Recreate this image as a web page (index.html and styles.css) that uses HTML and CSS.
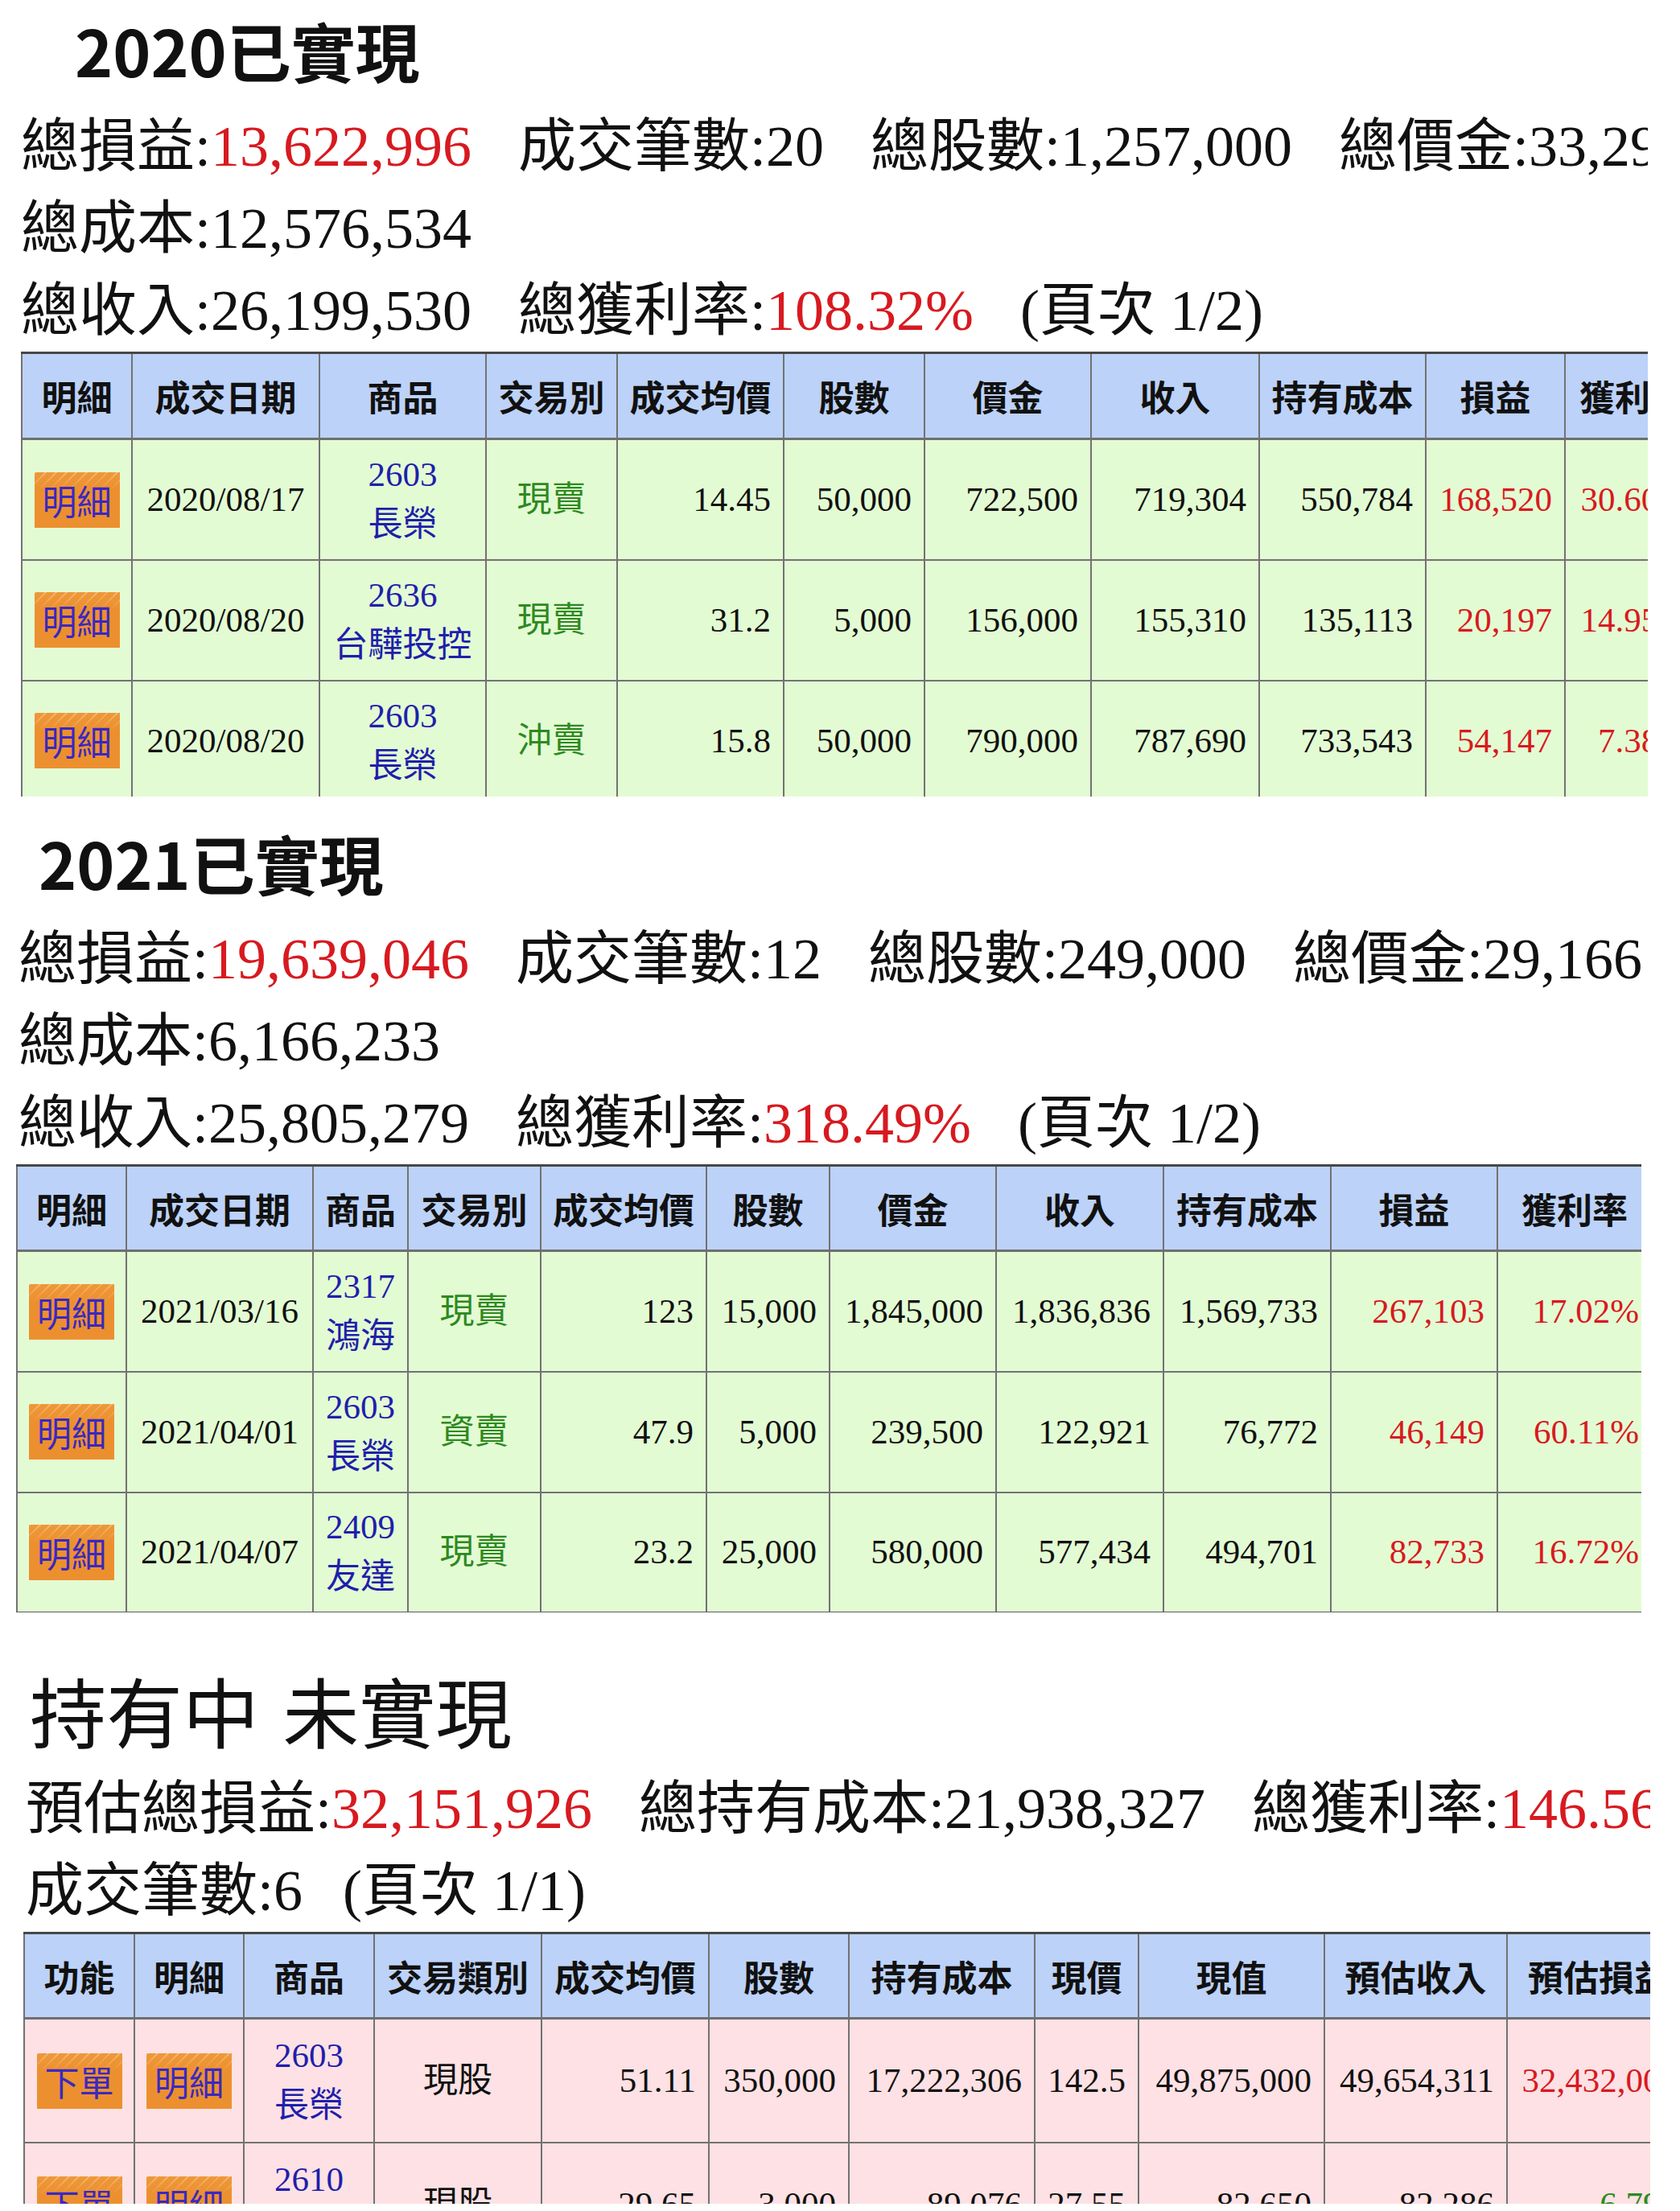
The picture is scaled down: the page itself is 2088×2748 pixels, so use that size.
FILE: index.html
```html
<!DOCTYPE html>
<html lang="zh-Hant">
<head>
<meta charset="utf-8">
<title>已實現 / 未實現</title>
<link rel="stylesheet" href="styles.css">
</head>
<body>

<section class="sec sec1">
  <h1 class="title title1">2020已實現</h1>
  <div class="line"><span class="it">總損益:<span class="red">13,622,996</span></span><span class="it">成交筆數:20</span><span class="it">總股數:1,257,000</span><span class="it">總價金:33,292,500</span></div>
  <div class="line"><span class="it">總成本:12,576,534</span></div>
  <div class="line"><span class="it">總收入:26,199,530</span><span class="it">總獲利率:<span class="red">108.32%</span></span><span class="it">(頁次 1/2)</span></div>
  <table class="tbl t1">
    <colgroup><col><col><col><col><col><col><col><col><col><col><col></colgroup>
    <thead>
      <tr><th>明細</th><th>成交日期</th><th>商品</th><th>交易別</th><th>成交均價</th><th>股數</th><th>價金</th><th>收入</th><th>持有成本</th><th>損益</th><th>獲利率</th></tr>
    </thead>
    <tbody>
      <tr>
        <td class="c"><span class="btn">明細</span></td>
        <td class="c">2020/08/17</td>
        <td class="c prod">2603<br>長榮</td>
        <td class="c kind">現賣</td>
        <td class="r">14.45</td><td class="r">50,000</td><td class="r">722,500</td><td class="r">719,304</td><td class="r">550,784</td>
        <td class="r red">168,520</td><td class="r red">30.60%</td>
      </tr>
      <tr>
        <td class="c"><span class="btn">明細</span></td>
        <td class="c">2020/08/20</td>
        <td class="c prod">2636<br>台驊投控</td>
        <td class="c kind">現賣</td>
        <td class="r">31.2</td><td class="r">5,000</td><td class="r">156,000</td><td class="r">155,310</td><td class="r">135,113</td>
        <td class="r red">20,197</td><td class="r red">14.95%</td>
      </tr>
      <tr>
        <td class="c"><span class="btn">明細</span></td>
        <td class="c">2020/08/20</td>
        <td class="c prod">2603<br>長榮</td>
        <td class="c kind">沖賣</td>
        <td class="r">15.8</td><td class="r">50,000</td><td class="r">790,000</td><td class="r">787,690</td><td class="r">733,543</td>
        <td class="r red">54,147</td><td class="r red">7.38%</td>
      </tr>
    </tbody>
  </table>
</section>

<section class="sec sec2">
  <h1 class="title title2">2021已實現</h1>
  <div class="line"><span class="it">總損益:<span class="red">19,639,046</span></span><span class="it">成交筆數:12</span><span class="it">總股數:249,000</span><span class="it">總價金:29,166,500</span></div>
  <div class="line"><span class="it">總成本:6,166,233</span></div>
  <div class="line"><span class="it">總收入:25,805,279</span><span class="it">總獲利率:<span class="red">318.49%</span></span><span class="it">(頁次 1/2)</span></div>
  <table class="tbl t2">
    <colgroup><col><col><col><col><col><col><col><col><col><col><col></colgroup>
    <thead>
      <tr><th>明細</th><th>成交日期</th><th>商品</th><th>交易別</th><th>成交均價</th><th>股數</th><th>價金</th><th>收入</th><th>持有成本</th><th>損益</th><th>獲利率</th></tr>
    </thead>
    <tbody>
      <tr>
        <td class="c"><span class="btn">明細</span></td>
        <td class="c">2021/03/16</td>
        <td class="c prod">2317<br>鴻海</td>
        <td class="c kind">現賣</td>
        <td class="r">123</td><td class="r">15,000</td><td class="r">1,845,000</td><td class="r">1,836,836</td><td class="r">1,569,733</td>
        <td class="r red">267,103</td><td class="r red">17.02%</td>
      </tr>
      <tr>
        <td class="c"><span class="btn">明細</span></td>
        <td class="c">2021/04/01</td>
        <td class="c prod">2603<br>長榮</td>
        <td class="c kind">資賣</td>
        <td class="r">47.9</td><td class="r">5,000</td><td class="r">239,500</td><td class="r">122,921</td><td class="r">76,772</td>
        <td class="r red">46,149</td><td class="r red">60.11%</td>
      </tr>
      <tr>
        <td class="c"><span class="btn">明細</span></td>
        <td class="c">2021/04/07</td>
        <td class="c prod">2409<br>友達</td>
        <td class="c kind">現賣</td>
        <td class="r">23.2</td><td class="r">25,000</td><td class="r">580,000</td><td class="r">577,434</td><td class="r">494,701</td>
        <td class="r red">82,733</td><td class="r red">16.72%</td>
      </tr>
    </tbody>
  </table>
</section>

<section class="sec sec3">
  <h1 class="title3">持有中 未實現</h1>
  <div class="line"><span class="it">預估總損益:<span class="red">32,151,926</span></span><span class="it">總持有成本:21,938,327</span><span class="it">總獲利率:<span class="red">146.56%</span></span></div>
  <div class="line"><span class="it it-s">成交筆數:6</span><span class="it">(頁次 1/1)</span></div>
  <table class="tbl t3">
    <colgroup><col><col><col><col><col><col><col><col><col><col><col></colgroup>
    <thead>
      <tr><th>功能</th><th>明細</th><th>商品</th><th>交易類別</th><th>成交均價</th><th>股數</th><th>持有成本</th><th>現價</th><th>現值</th><th>預估收入</th><th>預估損益</th></tr>
    </thead>
    <tbody>
      <tr>
        <td class="c"><span class="btn">下單</span></td>
        <td class="c"><span class="btn">明細</span></td>
        <td class="c prod">2603<br>長榮</td>
        <td class="c">現股</td>
        <td class="r">51.11</td><td class="r">350,000</td><td class="r">17,222,306</td><td class="r">142.5</td><td class="r">49,875,000</td><td class="r">49,654,311</td>
        <td class="r red">32,432,005</td>
      </tr>
      <tr>
        <td class="c"><span class="btn">下單</span></td>
        <td class="c"><span class="btn">明細</span></td>
        <td class="c prod">2610<br>華航</td>
        <td class="c">現股</td>
        <td class="r">29.65</td><td class="r">3,000</td><td class="r">89,076</td><td class="r">27.55</td><td class="r">82,650</td><td class="r">82,286</td>
        <td class="r loss">-6,790</td>
      </tr>
    </tbody>
  </table>
</section>

</body>
</html>
```

FILE: styles.css
```css
html, body {
  margin: 0;
  padding: 0;
  background: #ffffff;
}

body {
  font-family: "Liberation Serif", "Noto Sans CJK TC", serif;
  color: #111111;
}

.sec {
  overflow: hidden;
  white-space: nowrap;
}

.sec1 { width: 2048px; height: 990px; }
.sec2 { width: 2040px; height: 1014px; }
.sec3 { width: 2051px; height: 735px; }

/* section titles */
.title {
  margin: 0;
  font-family: "Noto Sans CJK TC", sans-serif;
  font-weight: 700;
  font-size: 80px;
  line-height: 100px;
  height: 120px;
}
.title1 { padding: 11px 0 0 93px; }
.title2 { padding: 31px 0 0 48px; }

.title3 {
  margin: 0;
  font-family: "Noto Sans CJK TC", sans-serif;
  font-weight: 400;
  font-size: 95px;
  line-height: 100px;
  height: 122px;
  padding: 71px 0 0 37px;
  word-spacing: 8px;
}

/* summary lines */
.line {
  font-size: 72px;
  line-height: 102px;
  height: 102px;
}
.sec1 .line { padding-left: 26px; }
.sec2 .line { padding-left: 23px; }
.sec3 .line { padding-left: 32px; }

.it { margin-right: 58px; }
.it-s { margin-right: 50px; }

.red { color: #d71a20; }
.loss { color: #2d8a1f; }

/* tables */
.tbl {
  border-collapse: collapse;
  table-layout: fixed;
}
.t1 { width: 2086px; margin-left: 26px; }
.t2 { width: 2032px; margin-left: 20px; }
.t3 { width: 2071px; margin-left: 29px; }

.t1 col:nth-child(1)  { width: 137px; }
.t1 col:nth-child(2)  { width: 233px; }
.t1 col:nth-child(3)  { width: 207px; }
.t1 col:nth-child(4)  { width: 163px; }
.t1 col:nth-child(5)  { width: 207px; }
.t1 col:nth-child(6)  { width: 175px; }
.t1 col:nth-child(7)  { width: 207px; }
.t1 col:nth-child(8)  { width: 209px; }
.t1 col:nth-child(9)  { width: 207px; }
.t1 col:nth-child(10) { width: 173px; }
.t1 col:nth-child(11) { width: 168px; }

.t2 col:nth-child(1)  { width: 136px; }
.t2 col:nth-child(2)  { width: 232px; }
.t2 col:nth-child(3)  { width: 118px; }
.t2 col:nth-child(4)  { width: 165px; }
.t2 col:nth-child(5)  { width: 206px; }
.t2 col:nth-child(6)  { width: 153px; }
.t2 col:nth-child(7)  { width: 207px; }
.t2 col:nth-child(8)  { width: 208px; }
.t2 col:nth-child(9)  { width: 208px; }
.t2 col:nth-child(10) { width: 207px; }
.t2 col:nth-child(11) { width: 192px; }

.t3 col:nth-child(1)  { width: 137px; }
.t3 col:nth-child(2)  { width: 136px; }
.t3 col:nth-child(3)  { width: 162px; }
.t3 col:nth-child(4)  { width: 208px; }
.t3 col:nth-child(5)  { width: 208px; }
.t3 col:nth-child(6)  { width: 174px; }
.t3 col:nth-child(7)  { width: 231px; }
.t3 col:nth-child(8)  { width: 129px; }
.t3 col:nth-child(9)  { width: 231px; }
.t3 col:nth-child(10) { width: 227px; }
.t3 col:nth-child(11) { width: 228px; }

.tbl th,
.tbl td {
  border: 2px solid #727272;
  padding: 0 15px;
  overflow: hidden;
}

.tbl th {
  background: #bcd2f8;
  font-family: "Noto Sans CJK TC", sans-serif;
  font-weight: 700;
  font-size: 44px;
  color: #111111;
  text-align: center;
  padding: 0;
  border-top: 3px solid #474747;
  border-bottom: 3px solid #6f6f6f;
}

.t1 thead tr { height: 107px; }
.t2 thead tr, .t3 thead tr { height: 106px; }
.t1 tbody tr { height: 150px; }
.t2 tbody tr { height: 150px; }
.t3 tbody tr { height: 154px; }

.tbl td {
  font-size: 43px;
  line-height: 62px;
  vertical-align: middle;
  color: #111111;
}
.t1 td, .t2 td { background: #e3fbd3; }
.t3 td { background: #fde1e4; }
.t2 tbody tr:last-child td { border-bottom: 3px solid #5c5c5c; }

.tbl td.c { text-align: center; padding: 0; }
.tbl td.r { text-align: right; }
.tbl td.red { color: #d71a20; }
.tbl td.loss { color: #2d8a1f; }

.tbl td.prod { color: #1f1fab; }
.tbl td.kind { color: #2d8a1f; }

/* orange buttons */
.btn {
  display: inline-block;
  width: 106px;
  height: 69px;
  line-height: 69px;
  vertical-align: middle;
  font-family: "Noto Sans CJK TC", sans-serif;
  font-size: 43px;
  color: #3a28c2;
  text-align: center;
  background:
    linear-gradient(to bottom, rgba(236, 144, 47, 0) 0, #ec902f 100%) top left / 100% 22px no-repeat,
    repeating-linear-gradient(135deg, #f4b573 0 2px, #ee9838 2px 9px) top left / 100% 22px no-repeat,
    #ec902f;
}
```
